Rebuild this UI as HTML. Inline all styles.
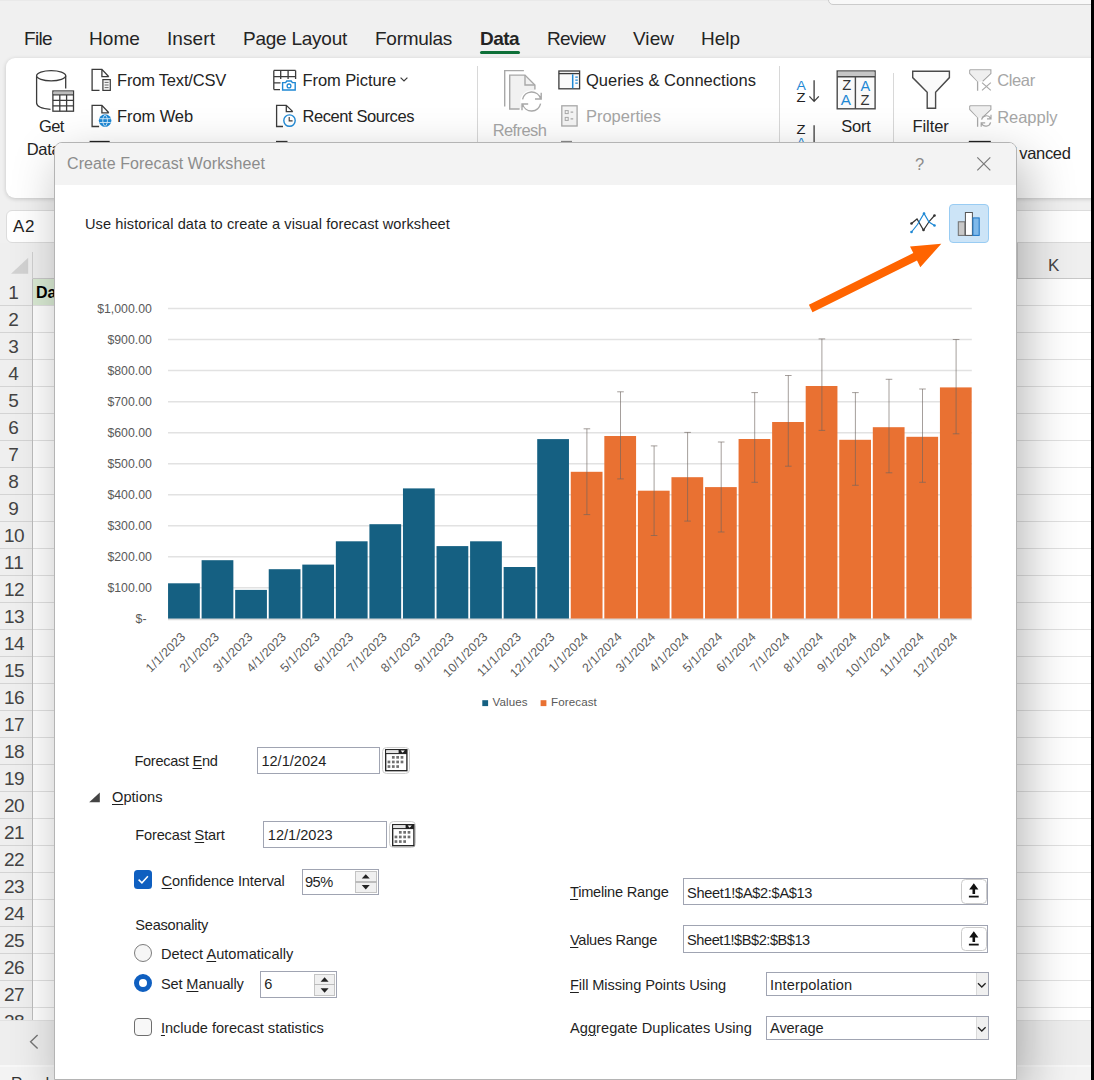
<!DOCTYPE html>
<html><head><meta charset="utf-8"><title>Create Forecast Worksheet</title>
<style>
html,body{margin:0;padding:0}
body{width:1094px;height:1080px;overflow:hidden;position:relative;background:#f0f0f0;font-family:"Liberation Sans",sans-serif}
.b{position:absolute;display:block}
.t{position:absolute;white-space:nowrap}
svg text{font-family:"Liberation Sans",sans-serif}
u{text-decoration-thickness:1px;text-underline-offset:1.5px}
</style></head><body>
<div class="b" style="left:0px;top:0px;width:828px;height:1px;background:#e9e9e9;"></div>
<div class="b" style="left:828px;top:-7px;width:266px;height:9.5px;background:#f8f8f8;border:1.4px solid #cbcbcb;border-radius:5px;"></div>
<div class="t" style="left:24.0px;top:24.5px;font-size:19px;line-height:27px;color:#242424;letter-spacing:-0.653px;">File</div>
<div class="t" style="left:89.0px;top:24.5px;font-size:19px;line-height:27px;color:#242424;letter-spacing:0.080px;">Home</div>
<div class="t" style="left:167.0px;top:24.5px;font-size:19px;line-height:27px;color:#242424;letter-spacing:0.081px;">Insert</div>
<div class="t" style="left:243.0px;top:24.5px;font-size:19px;line-height:27px;color:#242424;letter-spacing:-0.245px;">Page Layout</div>
<div class="t" style="left:375.0px;top:24.5px;font-size:19px;line-height:27px;color:#242424;letter-spacing:-0.272px;">Formulas</div>
<div class="t" style="left:480.0px;top:24.5px;font-size:19px;line-height:27px;color:#242424;font-weight:bold;letter-spacing:-0.545px;">Data</div>
<div class="t" style="left:547.0px;top:24.5px;font-size:19px;line-height:27px;color:#242424;letter-spacing:-0.716px;">Review</div>
<div class="t" style="left:633.0px;top:24.5px;font-size:19px;line-height:27px;color:#242424;letter-spacing:0.040px;">View</div>
<div class="t" style="left:701.0px;top:24.5px;font-size:19px;line-height:27px;color:#242424;letter-spacing:-0.019px;">Help</div>
<div class="b" style="left:479.8px;top:51.2px;width:40.6px;height:3px;background:#0e7038;border-radius:1.5px;"></div>
<div class="b" style="left:6px;top:58px;width:1090px;height:140px;background:#fff;border-radius:9px 0 0 9px;box-shadow:0 1px 4px rgba(0,0,0,.18);"></div>
<div class="b" style="left:6px;top:209.6px;width:1090px;height:33px;background:#fff;border:1px solid #dcdcdc;border-radius:6px;box-sizing:border-box;"></div>
<div class="t" style="left:13.0px;top:214.5px;font-size:17px;line-height:24px;color:#222;letter-spacing:0.603px;">A2</div>
<div class="b" style="left:0;top:243px;width:1091px;height:778px;background:#fff;"></div>
<div class="b" style="left:0px;top:243px;width:1091px;height:35px;background:#efefef;border-bottom:1px solid #c8c8c8;"></div>
<div class="b" style="left:0px;top:278px;width:32px;height:743px;background:#efefef;border-right:1px solid #bdbdbd;"></div>
<svg class="b" style="left:0;top:243px" width="40" height="36"><polygon points="11,30.8 28.2,30.8 28.2,14.8" fill="#d2d2d2"/><line x1="32.5" y1="9" x2="32.5" y2="36" stroke="#d0d0d0"/></svg>
<div class="b" style="left:33px;top:279px;width:30px;height:26px;background:#d9ead3;"></div>
<div class="t" style="left:36.0px;top:281.5px;font-size:16px;line-height:22px;color:#000;font-weight:bold;">Date</div>
<div class="b" style="left:0px;top:305px;width:32px;height:1px;background:#d4d4d4;"></div>
<div class="b" style="left:33px;top:305px;width:1058px;height:1px;background:#e1e1e1;"></div>
<div class="t" style="left:8.2px;top:279.0px;font-size:19px;line-height:27px;color:#444;">1</div>
<div class="b" style="left:0px;top:332px;width:32px;height:1px;background:#d4d4d4;"></div>
<div class="b" style="left:33px;top:332px;width:1058px;height:1px;background:#e1e1e1;"></div>
<div class="t" style="left:8.2px;top:306.0px;font-size:19px;line-height:27px;color:#444;">2</div>
<div class="b" style="left:0px;top:359px;width:32px;height:1px;background:#d4d4d4;"></div>
<div class="b" style="left:33px;top:359px;width:1058px;height:1px;background:#e1e1e1;"></div>
<div class="t" style="left:8.2px;top:333.0px;font-size:19px;line-height:27px;color:#444;">3</div>
<div class="b" style="left:0px;top:386px;width:32px;height:1px;background:#d4d4d4;"></div>
<div class="b" style="left:33px;top:386px;width:1058px;height:1px;background:#e1e1e1;"></div>
<div class="t" style="left:8.2px;top:360.0px;font-size:19px;line-height:27px;color:#444;">4</div>
<div class="b" style="left:0px;top:413px;width:32px;height:1px;background:#d4d4d4;"></div>
<div class="b" style="left:33px;top:413px;width:1058px;height:1px;background:#e1e1e1;"></div>
<div class="t" style="left:8.2px;top:387.0px;font-size:19px;line-height:27px;color:#444;">5</div>
<div class="b" style="left:0px;top:440px;width:32px;height:1px;background:#d4d4d4;"></div>
<div class="b" style="left:33px;top:440px;width:1058px;height:1px;background:#e1e1e1;"></div>
<div class="t" style="left:8.2px;top:414.0px;font-size:19px;line-height:27px;color:#444;">6</div>
<div class="b" style="left:0px;top:467px;width:32px;height:1px;background:#d4d4d4;"></div>
<div class="b" style="left:33px;top:467px;width:1058px;height:1px;background:#e1e1e1;"></div>
<div class="t" style="left:8.2px;top:441.0px;font-size:19px;line-height:27px;color:#444;">7</div>
<div class="b" style="left:0px;top:494px;width:32px;height:1px;background:#d4d4d4;"></div>
<div class="b" style="left:33px;top:494px;width:1058px;height:1px;background:#e1e1e1;"></div>
<div class="t" style="left:8.2px;top:468.0px;font-size:19px;line-height:27px;color:#444;">8</div>
<div class="b" style="left:0px;top:521px;width:32px;height:1px;background:#d4d4d4;"></div>
<div class="b" style="left:33px;top:521px;width:1058px;height:1px;background:#e1e1e1;"></div>
<div class="t" style="left:8.2px;top:495.0px;font-size:19px;line-height:27px;color:#444;">9</div>
<div class="b" style="left:0px;top:548px;width:32px;height:1px;background:#d4d4d4;"></div>
<div class="b" style="left:33px;top:548px;width:1058px;height:1px;background:#e1e1e1;"></div>
<div class="t" style="left:4.0px;top:522.0px;font-size:19px;line-height:27px;color:#444;letter-spacing:-0.566px;">10</div>
<div class="b" style="left:0px;top:575px;width:32px;height:1px;background:#d4d4d4;"></div>
<div class="b" style="left:33px;top:575px;width:1058px;height:1px;background:#e1e1e1;"></div>
<div class="t" style="left:4.0px;top:549.0px;font-size:19px;line-height:27px;color:#444;letter-spacing:0.139px;">11</div>
<div class="b" style="left:0px;top:602px;width:32px;height:1px;background:#d4d4d4;"></div>
<div class="b" style="left:33px;top:602px;width:1058px;height:1px;background:#e1e1e1;"></div>
<div class="t" style="left:4.0px;top:576.0px;font-size:19px;line-height:27px;color:#444;letter-spacing:-0.566px;">12</div>
<div class="b" style="left:0px;top:629px;width:32px;height:1px;background:#d4d4d4;"></div>
<div class="b" style="left:33px;top:629px;width:1058px;height:1px;background:#e1e1e1;"></div>
<div class="t" style="left:4.0px;top:603.0px;font-size:19px;line-height:27px;color:#444;letter-spacing:-0.566px;">13</div>
<div class="b" style="left:0px;top:656px;width:32px;height:1px;background:#d4d4d4;"></div>
<div class="b" style="left:33px;top:656px;width:1058px;height:1px;background:#e1e1e1;"></div>
<div class="t" style="left:4.0px;top:630.0px;font-size:19px;line-height:27px;color:#444;letter-spacing:-0.566px;">14</div>
<div class="b" style="left:0px;top:683px;width:32px;height:1px;background:#d4d4d4;"></div>
<div class="b" style="left:33px;top:683px;width:1058px;height:1px;background:#e1e1e1;"></div>
<div class="t" style="left:4.0px;top:657.0px;font-size:19px;line-height:27px;color:#444;letter-spacing:-0.566px;">15</div>
<div class="b" style="left:0px;top:710px;width:32px;height:1px;background:#d4d4d4;"></div>
<div class="b" style="left:33px;top:710px;width:1058px;height:1px;background:#e1e1e1;"></div>
<div class="t" style="left:4.0px;top:684.0px;font-size:19px;line-height:27px;color:#444;letter-spacing:-0.566px;">16</div>
<div class="b" style="left:0px;top:737px;width:32px;height:1px;background:#d4d4d4;"></div>
<div class="b" style="left:33px;top:737px;width:1058px;height:1px;background:#e1e1e1;"></div>
<div class="t" style="left:4.0px;top:711.0px;font-size:19px;line-height:27px;color:#444;letter-spacing:-0.566px;">17</div>
<div class="b" style="left:0px;top:764px;width:32px;height:1px;background:#d4d4d4;"></div>
<div class="b" style="left:33px;top:764px;width:1058px;height:1px;background:#e1e1e1;"></div>
<div class="t" style="left:4.0px;top:738.0px;font-size:19px;line-height:27px;color:#444;letter-spacing:-0.566px;">18</div>
<div class="b" style="left:0px;top:791px;width:32px;height:1px;background:#d4d4d4;"></div>
<div class="b" style="left:33px;top:791px;width:1058px;height:1px;background:#e1e1e1;"></div>
<div class="t" style="left:4.0px;top:765.0px;font-size:19px;line-height:27px;color:#444;letter-spacing:-0.566px;">19</div>
<div class="b" style="left:0px;top:818px;width:32px;height:1px;background:#d4d4d4;"></div>
<div class="b" style="left:33px;top:818px;width:1058px;height:1px;background:#e1e1e1;"></div>
<div class="t" style="left:4.0px;top:792.0px;font-size:19px;line-height:27px;color:#444;letter-spacing:-0.566px;">20</div>
<div class="b" style="left:0px;top:845px;width:32px;height:1px;background:#d4d4d4;"></div>
<div class="b" style="left:33px;top:845px;width:1058px;height:1px;background:#e1e1e1;"></div>
<div class="t" style="left:4.0px;top:819.0px;font-size:19px;line-height:27px;color:#444;letter-spacing:-0.566px;">21</div>
<div class="b" style="left:0px;top:872px;width:32px;height:1px;background:#d4d4d4;"></div>
<div class="b" style="left:33px;top:872px;width:1058px;height:1px;background:#e1e1e1;"></div>
<div class="t" style="left:4.0px;top:846.0px;font-size:19px;line-height:27px;color:#444;letter-spacing:-0.566px;">22</div>
<div class="b" style="left:0px;top:899px;width:32px;height:1px;background:#d4d4d4;"></div>
<div class="b" style="left:33px;top:899px;width:1058px;height:1px;background:#e1e1e1;"></div>
<div class="t" style="left:4.0px;top:873.0px;font-size:19px;line-height:27px;color:#444;letter-spacing:-0.566px;">23</div>
<div class="b" style="left:0px;top:926px;width:32px;height:1px;background:#d4d4d4;"></div>
<div class="b" style="left:33px;top:926px;width:1058px;height:1px;background:#e1e1e1;"></div>
<div class="t" style="left:4.0px;top:900.0px;font-size:19px;line-height:27px;color:#444;letter-spacing:-0.566px;">24</div>
<div class="b" style="left:0px;top:953px;width:32px;height:1px;background:#d4d4d4;"></div>
<div class="b" style="left:33px;top:953px;width:1058px;height:1px;background:#e1e1e1;"></div>
<div class="t" style="left:4.0px;top:927.0px;font-size:19px;line-height:27px;color:#444;letter-spacing:-0.566px;">25</div>
<div class="b" style="left:0px;top:980px;width:32px;height:1px;background:#d4d4d4;"></div>
<div class="b" style="left:33px;top:980px;width:1058px;height:1px;background:#e1e1e1;"></div>
<div class="t" style="left:4.0px;top:954.0px;font-size:19px;line-height:27px;color:#444;letter-spacing:-0.566px;">26</div>
<div class="b" style="left:0px;top:1007px;width:32px;height:1px;background:#d4d4d4;"></div>
<div class="b" style="left:33px;top:1007px;width:1058px;height:1px;background:#e1e1e1;"></div>
<div class="t" style="left:4.0px;top:981.0px;font-size:19px;line-height:27px;color:#444;letter-spacing:-0.566px;">27</div>
<div class="b" style="left:0px;top:1034px;width:32px;height:1px;background:#d4d4d4;"></div>
<div class="b" style="left:33px;top:1034px;width:1058px;height:1px;background:#e1e1e1;"></div>
<div class="t" style="left:4.0px;top:1008.0px;font-size:19px;line-height:27px;color:#444;letter-spacing:-0.566px;">28</div>
<div class="t" style="left:1048.0px;top:254.3px;font-size:17px;line-height:24px;color:#444;">K</div>
<div class="b" style="left:1017px;top:243px;width:1px;height:35px;background:#d0d0d0;"></div>
<div class="b" style="left:0px;top:1020px;width:1091px;height:45px;background:#eeeeee;border-top:1px solid #e2e2e2;"></div>
<div class="b" style="left:0px;top:1065px;width:1091px;height:15px;background:#f3f3f3;border-top:2px solid #f8f8f8;"></div>
<svg class="b" style="left:26px;top:1032px" width="16" height="20"><polyline points="11.6,3 4.6,9.7 11.6,16.4" fill="none" stroke="#767676" stroke-width="1.4"/></svg>
<div class="t" style="left:11.0px;top:1072.8px;font-size:16px;line-height:22px;color:#333;">Ready</div>
<div class="b" style="left:1091px;top:0px;width:3px;height:1080px;background:#000;"></div>
<svg class="b" style="left:0;top:0" width="1094" height="200" viewBox="0 0 1094 200" fill="none" stroke-linecap="butt">
<path d="M36.6 75.7 V103 C36.6 106.5 42 108.6 50.5 109.3 M65.7 75.7 V88.5" stroke="#3b3b3b" stroke-width="1.3"/>
<ellipse cx="51.15" cy="75.7" rx="14.55" ry="5.1" stroke="#3b3b3b" stroke-width="1.3" fill="#fff"/>
<rect x="52.9" y="91" width="20.6" height="20.2" fill="#fff" stroke="#3b3b3b" stroke-width="1.3"/>
<rect x="53.5" y="91.6" width="19.4" height="2.6" fill="#bdbdbd"/>
<path d="M52.9 94.8 H73.5 M52.9 100.3 H73.5 M52.9 105.8 H73.5 M59.8 94.8 V111.2 M66.6 94.8 V111.2" stroke="#3b3b3b" stroke-width="1.3"/>
<path d="M99.5 90.4 H92.1 V69.3 H101.89999999999999 L108.8 76.7 M101.89999999999999 69.3 V76.7 H108.8" stroke="#3b3b3b" stroke-width="1.3"/>
<rect x="102.9" y="79.6" width="7.4" height="10.8" stroke="#3b3b3b" stroke-width="1.2" fill="#f4f4f4"/>
<path d="M104.6 82.4 H108.6 M104.6 85 H108.6 M104.6 87.6 H108.6" stroke="#6a6a6a" stroke-width="1"/>
<path d="M99.1 126.5 H92.1 V105.4 H101.89999999999999 L108.8 112.80000000000001 M101.89999999999999 105.4 V112.80000000000001 H108.8" stroke="#3b3b3b" stroke-width="1.3"/>
<circle cx="105.1" cy="120.6" r="6.3" fill="#1e88d4"/>
<path d="M99.5 118.7 H110.7 M99.5 122.5 H110.7 M105.1 114.8 C102 117.5 102 123.7 105.1 126.4 C108.2 123.7 108.2 117.5 105.1 114.8 Z" stroke="#d9ecfa" stroke-width="0.9"/>
<path d="M89.6 141.5 H109.7" stroke="#222" stroke-width="1.3"/>
<path d="M276 141.5 H287.5" stroke="#333" stroke-width="1.3"/>
<path d="M561 141.5 H572" stroke="#8a8a8a" stroke-width="1.3"/>
<path d="M968.8 141.5 H990.8" stroke="#222" stroke-width="1.3"/>
<path d="M273.8 70.4 H295.6 M273.8 76.7 H295.6 M273.8 82.9 H280.5 M273.8 89.6 H280 M273.8 70.4 V89.6 M280.7 70.4 V79 M288.1 70.4 V79 M295.6 70.4 V79" stroke="#3b3b3b" stroke-width="1.3"/>
<path d="M282.6 90 V82.6 H285.6 L286.8 81 H291.2 L292.4 82.6 H295.2 V90 Z" stroke="#1e88d4" stroke-width="1.4" fill="#fff"/>
<circle cx="289" cy="85.9" r="1.9" stroke="#1e88d4" stroke-width="1.3"/>
<path d="M283 126.5 H276.6 V105.4 H286.3 L292.8 111.6 M286.3 105.4 V111.6 H292.8" stroke="#3b3b3b" stroke-width="1.3"/>
<circle cx="289.5" cy="120.6" r="5.7" stroke="#1e88d4" stroke-width="1.4" fill="#fff"/>
<path d="M289.2 117 V120.9 H292.6" stroke="#3b3b3b" stroke-width="1.1"/>
<path d="M400.6 77.6 L404 81 L407.4 77.6" stroke="#3b3b3b" stroke-width="1.2"/>
<path d="M477.5 66 V142 M779.5 66 V142 M893.5 73 V142" stroke="#d8d8d8" stroke-width="1"/>
<path d="M504.7 106.6 V70.6 H523.9" stroke="#a8a8a8" stroke-width="1.4"/>
<path d="M519.6 109 H509.7 V75.1 H525 L534.9 85 V89.5" stroke="#a8a8a8" stroke-width="1.4" fill="#f1f1f1"/>
<path d="M525 75.1 V85 H534.9" stroke="#a8a8a8" stroke-width="1.4"/>
<circle cx="531.6" cy="101.5" r="11.2" fill="#fff"/>
<path d="M522.6 99.3 A9.3 9.3 0 0 1 540.6 98.6 M541.2 92.8 V99 H535 M540.6 103.7 A9.3 9.3 0 0 1 522.6 104.4 M522 110.2 V104 H528.2" stroke="#a8a8a8" stroke-width="1.4"/>
<rect x="558.9" y="71" width="20.7" height="17.8" stroke="#3b3b3b" stroke-width="1.3" fill="#fafafa"/>
<path d="M558.9 73.6 H579.6" stroke="#3b3b3b" stroke-width="1.3"/>
<path d="M572.7 74.3 V88.2" stroke="#1e88d4" stroke-width="1.5"/>
<path d="M575.3 77.2 H577.8 M575.3 80.2 H577.8 M575.3 83.2 H577.8" stroke="#1e88d4" stroke-width="1.3"/>
<rect x="561.8" y="105.8" width="15.3" height="20.2" stroke="#a8a8a8" stroke-width="1.3" fill="#f4f4f4"/>
<rect x="565.2" y="110.6" width="3" height="3" stroke="#a8a8a8" stroke-width="1"/><rect x="565.2" y="117.4" width="3" height="3" stroke="#a8a8a8" stroke-width="1"/>
<path d="M570.6 112.1 H573.2 M570.6 118.9 H573.2" stroke="#a8a8a8" stroke-width="1.1"/>
<path d="M814.1 80.3 V101.2 M809.4 96.4 L814.1 101.4 L818.8 96.4" stroke="#3b3b3b" stroke-width="1.3"/>
<path d="M814.1 125.3 V143" stroke="#3b3b3b" stroke-width="1.3"/>
<rect x="837.2" y="71" width="37.9" height="37.8" stroke="#4a4a4a" stroke-width="1.4" fill="#fafafa"/>
<rect x="837.9" y="71.7" width="36.5" height="4.4" fill="#c6c6c6"/>
<path d="M837.2 76.7 H875.1 M855.4 76.7 V108.8" stroke="#4a4a4a" stroke-width="1.4"/>
<path d="M912.7 71.2 H949.4 V77.6 L935.6 92.2 V108.2 H927.2 V92.2 L912.7 77.6 Z" stroke="#4a4a4a" stroke-width="1.4" fill="#fafafa"/>
<path d="M969.8 69.8 H990.8 V73.39999999999999 L982.6 81.3 M977.6 90.8 V81.3 L969.8 73.39999999999999 V69.8" stroke="#a8a8a8" stroke-width="1.3" fill="none"/><path d="M970.4 70.39999999999999 H990.2 V73.2 L981 81.8 H978 L970.4 73.2 Z" fill="#efefef"/>
<path d="M982 82.6 L990.8 90.4 M990.8 82.6 L982 90.4" stroke="#a8a8a8" stroke-width="1.2"/>
<path d="M969.8 105.8 H990.8 V109.39999999999999 L982.6 117.3 M977.6 126.8 V117.3 L969.8 109.39999999999999 V105.8" stroke="#a8a8a8" stroke-width="1.3" fill="none"/><path d="M970.4 106.39999999999999 H990.2 V109.2 L981 117.8 H978 L970.4 109.2 Z" fill="#efefef"/>
<path d="M981.6 119.6 A4.8 4.8 0 0 1 990.6 118.4 M991 114.8 V118.8 H987 M990.6 122.4 A4.8 4.8 0 0 1 981.6 123.4 M981.2 126.8 V122.8 H985.2" stroke="#a8a8a8" stroke-width="1.2"/>
</svg>
<svg class="b" style="left:0;top:0" width="1094" height="143" viewBox="0 0 1094 143">
<text x="796.6" y="89.7" font-size="13.13" fill="#1e88d4" textLength="9.4" lengthAdjust="spacingAndGlyphs">A</text>
<text x="796.6" y="101.7" font-size="12.57" fill="#222" textLength="9.0" lengthAdjust="spacingAndGlyphs">Z</text>
<text x="796.6" y="134.4" font-size="12.71" fill="#222" textLength="9.0" lengthAdjust="spacingAndGlyphs">Z</text>
<text x="796.6" y="146.7" font-size="13.13" fill="#1e88d4" textLength="9.4" lengthAdjust="spacingAndGlyphs">A</text>
<text x="842.2" y="90.2" font-size="13.83" fill="#333" textLength="9.0" lengthAdjust="spacingAndGlyphs">Z</text>
<text x="840.7" y="105.4" font-size="15.08" fill="#1e88d4" textLength="10.2" lengthAdjust="spacingAndGlyphs">A</text>
<text x="860.5" y="91.1" font-size="15.08" fill="#1e88d4" textLength="9.7" lengthAdjust="spacingAndGlyphs">A</text>
<text x="860.5" y="105.4" font-size="15.08" fill="#333" textLength="9.0" lengthAdjust="spacingAndGlyphs">Z</text>
</svg>
<div class="t" style="left:38.9px;top:114.9px;font-size:16.5px;line-height:23px;color:#242424;letter-spacing:-0.531px;">Get</div>
<div class="t" style="left:26.8px;top:137.6px;font-size:16.5px;line-height:23px;color:#242424;letter-spacing:-0.338px;">Data</div>
<div class="t" style="left:117.0px;top:68.9px;font-size:16.5px;line-height:23px;color:#242424;letter-spacing:-0.196px;">From Text/CSV</div>
<div class="t" style="left:117.0px;top:105.0px;font-size:16.5px;line-height:23px;color:#242424;letter-spacing:-0.088px;">From Web</div>
<div class="t" style="left:302.5px;top:68.9px;font-size:16.5px;line-height:23px;color:#242424;letter-spacing:-0.077px;">From Picture</div>
<div class="t" style="left:302.5px;top:105.0px;font-size:16.5px;line-height:23px;color:#242424;letter-spacing:-0.421px;">Recent Sources</div>
<div class="t" style="left:492.7px;top:118.7px;font-size:16.5px;line-height:23px;color:#a6a6a6;letter-spacing:-0.610px;">Refresh</div>
<div class="t" style="left:586.0px;top:68.9px;font-size:16.5px;line-height:23px;color:#242424;letter-spacing:0.016px;">Queries &amp; Connections</div>
<div class="t" style="left:586.0px;top:105.0px;font-size:16.5px;line-height:23px;color:#a6a6a6;letter-spacing:-0.020px;">Properties</div>
<div class="t" style="left:841.2px;top:115.3px;font-size:16.5px;line-height:23px;color:#242424;letter-spacing:-0.215px;">Sort</div>
<div class="t" style="left:912.6px;top:115.3px;font-size:16.5px;line-height:23px;color:#242424;letter-spacing:-0.111px;">Filter</div>
<div class="t" style="left:997.2px;top:69.3px;font-size:16.5px;line-height:23px;color:#a6a6a6;letter-spacing:-0.365px;">Clear</div>
<div class="t" style="left:997.2px;top:105.5px;font-size:16.5px;line-height:23px;color:#a6a6a6;letter-spacing:-0.033px;">Reapply</div>
<div class="t" style="left:997.0px;top:141.9px;font-size:16.5px;line-height:23px;color:#242424;">A<span style="letter-spacing:2px">d</span><span style="letter-spacing:-0.3px">vanced</span></div>
<div class="b" style="left:53.9px;top:141.8px;width:963.6px;height:938.2px;background:#fff;border:1px solid #b4b4b4;border-radius:8px 8px 0 0;box-shadow:8px 18px 50px 0 rgba(0,0,0,.29);box-sizing:border-box;overflow:hidden"><div class="b" style="left:0;top:0;width:964px;height:41.8px;background:#f3f3f3"></div></div>
<div class="t" style="left:67.0px;top:152.8px;font-size:16px;line-height:22px;color:#8c8c8c;letter-spacing:0.107px;">Create Forecast Worksheet</div>
<div class="t" style="left:915.0px;top:152.5px;font-size:16.5px;line-height:23px;color:#8c8c8c;">?</div>
<svg class="b" style="left:975px;top:155px" width="18" height="18"><path d="M2.3 2.3 L15.3 15.3 M15.3 2.3 L2.3 15.3" stroke="#7a7a7a" stroke-width="1.2" fill="none"/></svg>
<div class="t" style="left:85.0px;top:214.2px;font-size:14.6px;line-height:20px;color:#1f1f1f;letter-spacing:0.069px;">Use historical data to create a visual forecast worksheet</div>
<div class="b" style="left:948.5px;top:203.5px;width:40.5px;height:39px;background:#cce4f7;border:1px solid #99ccf3;border-radius:4px;box-sizing:border-box"></div>
<svg class="b" style="left:0;top:0" width="1094" height="1080" viewBox="0 0 1094 1080" fill="none">
<rect x="958.3" y="221.8" width="6.6" height="13.6" fill="#c8c8c8" stroke="#6e6e6e" stroke-width="1"/>
<rect x="965.4" y="212.5" width="7" height="22.9" fill="#fff" stroke="#555" stroke-width="1"/>
<rect x="972.9" y="217.9" width="6.3" height="17.5" fill="#7fb9ea" stroke="#1b74c4" stroke-width="1"/>
<path d="M911.5 223.5 L917 219 L923.5 230 L929.5 221 L934.5 215.5" stroke="#333" stroke-width="1.2"/>
<path d="M911.5 232 L917.5 224.5 L924 213.5 L929 222 L934.5 225.5" stroke="#1e88d4" stroke-width="1.2"/>
<circle cx="911.5" cy="223.5" r="1.3" fill="#333"/>
<circle cx="923.5" cy="230" r="1.3" fill="#333"/>
<circle cx="934.5" cy="215.5" r="1.3" fill="#333"/>
<circle cx="911.5" cy="232" r="1.3" fill="#1e88d4"/>
<circle cx="924" cy="213.5" r="1.3" fill="#1e88d4"/>
<circle cx="934.5" cy="225.5" r="1.3" fill="#1e88d4"/>
<line x1="168.0" y1="618.8" x2="971.8" y2="618.8" stroke="#e2e2e2" stroke-width="1.5"/>
<line x1="168.0" y1="587.8" x2="971.8" y2="587.8" stroke="#e2e2e2" stroke-width="1.5"/>
<line x1="168.0" y1="556.8" x2="971.8" y2="556.8" stroke="#e2e2e2" stroke-width="1.5"/>
<line x1="168.0" y1="525.7" x2="971.8" y2="525.7" stroke="#e2e2e2" stroke-width="1.5"/>
<line x1="168.0" y1="494.7" x2="971.8" y2="494.7" stroke="#e2e2e2" stroke-width="1.5"/>
<line x1="168.0" y1="463.7" x2="971.8" y2="463.7" stroke="#e2e2e2" stroke-width="1.5"/>
<line x1="168.0" y1="432.7" x2="971.8" y2="432.7" stroke="#e2e2e2" stroke-width="1.5"/>
<line x1="168.0" y1="401.7" x2="971.8" y2="401.7" stroke="#e2e2e2" stroke-width="1.5"/>
<line x1="168.0" y1="370.6" x2="971.8" y2="370.6" stroke="#e2e2e2" stroke-width="1.5"/>
<line x1="168.0" y1="339.6" x2="971.8" y2="339.6" stroke="#e2e2e2" stroke-width="1.5"/>
<line x1="168.0" y1="308.6" x2="971.8" y2="308.6" stroke="#e2e2e2" stroke-width="1.5"/>
<rect x="168.05" y="583.3" width="31.75" height="35.4" fill="#156082"/>
<rect x="201.61" y="560.2" width="31.75" height="58.5" fill="#156082"/>
<rect x="235.17" y="589.9" width="31.75" height="28.8" fill="#156082"/>
<rect x="268.73" y="569.2" width="31.75" height="49.5" fill="#156082"/>
<rect x="302.29" y="564.6" width="31.75" height="54.1" fill="#156082"/>
<rect x="335.85" y="541.3" width="31.75" height="77.4" fill="#156082"/>
<rect x="369.41" y="524.2" width="31.75" height="94.5" fill="#156082"/>
<rect x="402.97" y="488.4" width="31.75" height="130.3" fill="#156082"/>
<rect x="436.53" y="546.1" width="31.75" height="72.6" fill="#156082"/>
<rect x="470.09" y="541.3" width="31.75" height="77.4" fill="#156082"/>
<rect x="503.65" y="567.0" width="31.75" height="51.7" fill="#156082"/>
<rect x="537.21" y="439.1" width="31.75" height="179.6" fill="#156082"/>
<rect x="570.77" y="471.8" width="31.75" height="146.9" fill="#e97132"/>
<rect x="604.33" y="436.0" width="31.75" height="182.7" fill="#e97132"/>
<rect x="637.89" y="490.7" width="31.75" height="128.0" fill="#e97132"/>
<rect x="671.45" y="477.2" width="31.75" height="141.5" fill="#e97132"/>
<rect x="705.01" y="487.1" width="31.75" height="131.6" fill="#e97132"/>
<rect x="738.57" y="439.0" width="31.75" height="179.7" fill="#e97132"/>
<rect x="772.13" y="422.0" width="31.75" height="196.7" fill="#e97132"/>
<rect x="805.69" y="386.0" width="31.75" height="232.7" fill="#e97132"/>
<rect x="839.25" y="439.8" width="31.75" height="178.9" fill="#e97132"/>
<rect x="872.81" y="427.2" width="31.75" height="191.5" fill="#e97132"/>
<rect x="906.37" y="436.8" width="31.75" height="181.9" fill="#e97132"/>
<rect x="939.93" y="387.4" width="31.75" height="231.3" fill="#e97132"/>
<line x1="168.0" y1="619.5" x2="971.8" y2="619.5" stroke="#dcdcdc" stroke-width="1.5"/>
<path d="M586.9 428.8 V514.6 M583.6 428.8 H590.2 M583.6 514.6 H590.2" stroke="rgba(110,100,95,.62)" stroke-width="1"/>
<path d="M620.5 391.8 V478.9 M617.2 391.8 H623.8 M617.2 478.9 H623.8" stroke="rgba(110,100,95,.62)" stroke-width="1"/>
<path d="M654.1 445.9 V535.5 M650.8 445.9 H657.4 M650.8 535.5 H657.4" stroke="rgba(110,100,95,.62)" stroke-width="1"/>
<path d="M687.6 432.4 V521.1 M684.3 432.4 H690.9 M684.3 521.1 H690.9" stroke="rgba(110,100,95,.62)" stroke-width="1"/>
<path d="M721.2 442.0 V532.0 M717.9 442.0 H724.5 M717.9 532.0 H724.5" stroke="rgba(110,100,95,.62)" stroke-width="1"/>
<path d="M754.7 392.6 V482.3 M751.4 392.6 H758.0 M751.4 482.3 H758.0" stroke="rgba(110,100,95,.62)" stroke-width="1"/>
<path d="M788.3 375.5 V466.2 M785.0 375.5 H791.6 M785.0 466.2 H791.6" stroke="rgba(110,100,95,.62)" stroke-width="1"/>
<path d="M821.9 338.9 V430.4 M818.6 338.9 H825.2 M818.6 430.4 H825.2" stroke="rgba(110,100,95,.62)" stroke-width="1"/>
<path d="M855.4 392.6 V485.3 M852.1 392.6 H858.7 M852.1 485.3 H858.7" stroke="rgba(110,100,95,.62)" stroke-width="1"/>
<path d="M889.0 379.3 V472.8 M885.7 379.3 H892.3 M885.7 472.8 H892.3" stroke="rgba(110,100,95,.62)" stroke-width="1"/>
<path d="M922.5 389.0 V482.3 M919.2 389.0 H925.8 M919.2 482.3 H925.8" stroke="rgba(110,100,95,.62)" stroke-width="1"/>
<path d="M956.1 339.5 V433.8 M952.8 339.5 H959.4 M952.8 433.8 H959.4" stroke="rgba(110,100,95,.62)" stroke-width="1"/>
<polygon points="812.5,312.2 917.0,260.4 920.3,267.2 941.3,243.8 910.0,246.4 913.3,253.1 808.9,304.8" fill="#ff6400"/>
<text x="146.5" y="623.1" text-anchor="end" font-size="12.3" fill="#595959">$-</text>
<text x="151.9" y="592.1" text-anchor="end" font-size="12.3" fill="#595959">$100.00</text>
<text x="151.9" y="561.1" text-anchor="end" font-size="12.3" fill="#595959">$200.00</text>
<text x="151.9" y="530.0" text-anchor="end" font-size="12.3" fill="#595959">$300.00</text>
<text x="151.9" y="499.0" text-anchor="end" font-size="12.3" fill="#595959">$400.00</text>
<text x="151.9" y="468.0" text-anchor="end" font-size="12.3" fill="#595959">$500.00</text>
<text x="151.9" y="437.0" text-anchor="end" font-size="12.3" fill="#595959">$600.00</text>
<text x="151.9" y="406.0" text-anchor="end" font-size="12.3" fill="#595959">$700.00</text>
<text x="151.9" y="374.9" text-anchor="end" font-size="12.3" fill="#595959">$800.00</text>
<text x="151.9" y="343.9" text-anchor="end" font-size="12.3" fill="#595959">$900.00</text>
<text x="151.9" y="312.9" text-anchor="end" font-size="12.3" fill="#595959">$1,000.00</text>
<text x="186.4" y="637.4" text-anchor="end" font-size="12.3" letter-spacing="0.3" fill="#595959" transform="rotate(-45 186.4 637.4)">1/1/2023</text>
<text x="220.0" y="637.4" text-anchor="end" font-size="12.3" letter-spacing="0.3" fill="#595959" transform="rotate(-45 220.0 637.4)">2/1/2023</text>
<text x="253.5" y="637.4" text-anchor="end" font-size="12.3" letter-spacing="0.3" fill="#595959" transform="rotate(-45 253.5 637.4)">3/1/2023</text>
<text x="287.1" y="637.4" text-anchor="end" font-size="12.3" letter-spacing="0.3" fill="#595959" transform="rotate(-45 287.1 637.4)">4/1/2023</text>
<text x="320.7" y="637.4" text-anchor="end" font-size="12.3" letter-spacing="0.3" fill="#595959" transform="rotate(-45 320.7 637.4)">5/1/2023</text>
<text x="354.2" y="637.4" text-anchor="end" font-size="12.3" letter-spacing="0.3" fill="#595959" transform="rotate(-45 354.2 637.4)">6/1/2023</text>
<text x="387.8" y="637.4" text-anchor="end" font-size="12.3" letter-spacing="0.3" fill="#595959" transform="rotate(-45 387.8 637.4)">7/1/2023</text>
<text x="421.3" y="637.4" text-anchor="end" font-size="12.3" letter-spacing="0.3" fill="#595959" transform="rotate(-45 421.3 637.4)">8/1/2023</text>
<text x="454.9" y="637.4" text-anchor="end" font-size="12.3" letter-spacing="0.3" fill="#595959" transform="rotate(-45 454.9 637.4)">9/1/2023</text>
<text x="488.5" y="637.4" text-anchor="end" font-size="12.3" letter-spacing="0.3" fill="#595959" transform="rotate(-45 488.5 637.4)">10/1/2023</text>
<text x="522.0" y="637.4" text-anchor="end" font-size="12.3" letter-spacing="0.3" fill="#595959" transform="rotate(-45 522.0 637.4)">11/1/2023</text>
<text x="555.6" y="637.4" text-anchor="end" font-size="12.3" letter-spacing="0.3" fill="#595959" transform="rotate(-45 555.6 637.4)">12/1/2023</text>
<text x="589.1" y="637.4" text-anchor="end" font-size="12.3" letter-spacing="0.3" fill="#595959" transform="rotate(-45 589.1 637.4)">1/1/2024</text>
<text x="622.7" y="637.4" text-anchor="end" font-size="12.3" letter-spacing="0.3" fill="#595959" transform="rotate(-45 622.7 637.4)">2/1/2024</text>
<text x="656.3" y="637.4" text-anchor="end" font-size="12.3" letter-spacing="0.3" fill="#595959" transform="rotate(-45 656.3 637.4)">3/1/2024</text>
<text x="689.8" y="637.4" text-anchor="end" font-size="12.3" letter-spacing="0.3" fill="#595959" transform="rotate(-45 689.8 637.4)">4/1/2024</text>
<text x="723.4" y="637.4" text-anchor="end" font-size="12.3" letter-spacing="0.3" fill="#595959" transform="rotate(-45 723.4 637.4)">5/1/2024</text>
<text x="756.9" y="637.4" text-anchor="end" font-size="12.3" letter-spacing="0.3" fill="#595959" transform="rotate(-45 756.9 637.4)">6/1/2024</text>
<text x="790.5" y="637.4" text-anchor="end" font-size="12.3" letter-spacing="0.3" fill="#595959" transform="rotate(-45 790.5 637.4)">7/1/2024</text>
<text x="824.1" y="637.4" text-anchor="end" font-size="12.3" letter-spacing="0.3" fill="#595959" transform="rotate(-45 824.1 637.4)">8/1/2024</text>
<text x="857.6" y="637.4" text-anchor="end" font-size="12.3" letter-spacing="0.3" fill="#595959" transform="rotate(-45 857.6 637.4)">9/1/2024</text>
<text x="891.2" y="637.4" text-anchor="end" font-size="12.3" letter-spacing="0.3" fill="#595959" transform="rotate(-45 891.2 637.4)">10/1/2024</text>
<text x="924.7" y="637.4" text-anchor="end" font-size="12.3" letter-spacing="0.3" fill="#595959" transform="rotate(-45 924.7 637.4)">11/1/2024</text>
<text x="958.3" y="637.4" text-anchor="end" font-size="12.3" letter-spacing="0.3" fill="#595959" transform="rotate(-45 958.3 637.4)">12/1/2024</text>
<rect x="482.3" y="700.2" width="5.8" height="5.9" fill="#156082"/><rect x="540.6" y="700.2" width="5.8" height="5.9" fill="#e97132"/>
<text x="492.4" y="706.1" font-size="11.6" fill="#595959" textLength="35.2" lengthAdjust="spacing">Values</text>
<text x="551" y="706.1" font-size="11.6" fill="#595959" textLength="45.8" lengthAdjust="spacing">Forecast</text>
</svg>
<div class="t" style="left:134.4px;top:751.0px;font-size:14.6px;line-height:20px;color:#1f1f1f;letter-spacing:-0.302px;">Forecast <u>E</u>nd</div>
<div class="b" style="left:257px;top:747px;width:123.2px;height:27px;background:#fff;border:1px solid #a0a4b2;box-sizing:border-box;"></div>
<div class="t" style="left:261.4px;top:751.0px;font-size:14.6px;line-height:20px;color:#1f1f1f;letter-spacing:-0.005px;">12/1/2024</div>
<div class="b" style="left:382.2px;top:746.7px;width:28.1px;height:27.6px;background:#fdfdfd;border:1px solid #cecece;border-radius:4.5px;box-sizing:border-box;"></div>
<svg class="b" style="left:384.8px;top:749.2px" width="23" height="23" viewBox="0 0 23 23" fill="none"><rect x="0.7" y="0.7" width="21.2" height="21" fill="#fff" stroke="#1e1e1e" stroke-width="1.3"/><rect x="1.2" y="1.2" width="12.6" height="3.2" fill="#e4e4e4"/><rect x="13.6" y="0.7" width="8.3" height="4" fill="#1e1e1e"/><path d="M0.7 4.6 H21.9" stroke="#1e1e1e" stroke-width="1"/><path d="M15.6 1.5 L17.7 3.7 L19.8 1.5 Z" fill="#fff"/><rect x="6.95" y="7.00" width="2.7" height="2.7" fill="#707070"/><rect x="11.30" y="7.00" width="2.7" height="2.7" fill="#707070"/><rect x="15.65" y="7.00" width="2.7" height="2.7" fill="#707070"/><rect x="2.60" y="11.60" width="2.7" height="2.7" fill="#707070"/><rect x="6.95" y="11.60" width="2.7" height="2.7" fill="#707070"/><rect x="11.30" y="11.60" width="2.7" height="2.7" fill="#707070"/><rect x="15.65" y="11.60" width="2.7" height="2.7" fill="#707070"/><rect x="2.60" y="16.20" width="2.7" height="2.7" fill="#707070"/><rect x="6.95" y="16.20" width="2.7" height="2.7" fill="#707070"/><rect x="11.30" y="16.20" width="2.7" height="2.7" fill="#707070"/></svg>
<svg class="b" style="left:88px;top:791px" width="14" height="13"><path d="M11.8 1.6 V11.2 H1.2 Z" fill="#444"/></svg>
<div class="t" style="left:112.0px;top:787.0px;font-size:14.6px;line-height:20px;color:#1f1f1f;letter-spacing:0.027px;"><u>O</u>ptions</div>
<div class="t" style="left:135.3px;top:825.0px;font-size:14.6px;line-height:20px;color:#1f1f1f;letter-spacing:-0.170px;">Forecast <u>S</u>tart</div>
<div class="b" style="left:263.3px;top:821.2px;width:124.2px;height:26.6px;background:#fff;border:1px solid #a0a4b2;box-sizing:border-box;"></div>
<div class="t" style="left:267.8px;top:825.0px;font-size:14.6px;line-height:20px;color:#1f1f1f;letter-spacing:-0.005px;">12/1/2023</div>
<div class="b" style="left:388.5px;top:820.9px;width:27.8px;height:27.6px;background:#fdfdfd;border:1px solid #cecece;border-radius:4.5px;box-sizing:border-box;"></div>
<svg class="b" style="left:391.9px;top:823.6999999999999px" width="23" height="23" viewBox="0 0 23 23" fill="none"><rect x="0.7" y="0.7" width="21.2" height="21" fill="#fff" stroke="#1e1e1e" stroke-width="1.3"/><rect x="1.2" y="1.2" width="12.6" height="3.2" fill="#e4e4e4"/><rect x="13.6" y="0.7" width="8.3" height="4" fill="#1e1e1e"/><path d="M0.7 4.6 H21.9" stroke="#1e1e1e" stroke-width="1"/><path d="M15.6 1.5 L17.7 3.7 L19.8 1.5 Z" fill="#fff"/><rect x="6.95" y="7.00" width="2.7" height="2.7" fill="#707070"/><rect x="11.30" y="7.00" width="2.7" height="2.7" fill="#707070"/><rect x="15.65" y="7.00" width="2.7" height="2.7" fill="#707070"/><rect x="2.60" y="11.60" width="2.7" height="2.7" fill="#707070"/><rect x="6.95" y="11.60" width="2.7" height="2.7" fill="#707070"/><rect x="11.30" y="11.60" width="2.7" height="2.7" fill="#707070"/><rect x="15.65" y="11.60" width="2.7" height="2.7" fill="#707070"/><rect x="2.60" y="16.20" width="2.7" height="2.7" fill="#707070"/><rect x="6.95" y="16.20" width="2.7" height="2.7" fill="#707070"/><rect x="11.30" y="16.20" width="2.7" height="2.7" fill="#707070"/></svg>
<div class="b" style="left:133.7px;top:870.2px;width:18.4px;height:18.4px;background:#0f5fc0;border-radius:3.5px;"></div>
<svg class="b" style="left:133.7px;top:870.2px" width="19" height="19"><path d="M4.6 9.6 L7.9 12.8 L13.9 6.2" stroke="#fff" stroke-width="1.5" fill="none"/></svg>
<div class="t" style="left:161.6px;top:871.0px;font-size:14.6px;line-height:20px;color:#1f1f1f;letter-spacing:-0.141px;"><u>C</u>onfidence Interval</div>
<div class="b" style="left:301.7px;top:868.7px;width:77.4px;height:26.6px;background:#fff;border:1px solid #a0a4b2;box-sizing:border-box;"></div>
<div class="t" style="left:304.9px;top:872.0px;font-size:14.6px;line-height:20px;color:#1f1f1f;letter-spacing:-0.474px;">95%</div>
<div class="b" style="left:355.4px;top:871px;width:21.5px;height:21.6px;background:#f0f0f0;border:1px solid #c4c4c4;box-sizing:border-box;"></div>
<div class="b" style="left:355.4px;top:881.0px;width:21.5px;height:1.6px;background:#bcbcbc;"></div>
<svg class="b" style="left:355.4px;top:871px" width="21.5" height="21.6"><path d="M6.75 7.6000000000000005 L10.75 3.2 L14.75 7.6000000000000005 Z M6.75 14.000000000000004 L10.75 18.400000000000002 L14.75 14.000000000000004 Z" fill="#222"/></svg>
<div class="t" style="left:135.3px;top:915.0px;font-size:14.6px;line-height:20px;color:#1f1f1f;letter-spacing:-0.252px;">Seasonality</div>
<div class="b" style="left:133.7px;top:944px;width:18px;height:18px;background:#f6f6f6;border:1px solid #7c7c7c;border-radius:50%;box-sizing:border-box;"></div>
<div class="t" style="left:160.9px;top:944.0px;font-size:14.6px;line-height:20px;color:#1f1f1f;letter-spacing:0.012px;">Detect <u>A</u>utomatically</div>
<div class="b" style="left:133.7px;top:974.4px;width:18px;height:18px;background:#fff;border:5.2px solid #0f5fc0;border-radius:50%;box-sizing:border-box;"></div>
<div class="t" style="left:160.9px;top:974.0px;font-size:14.6px;line-height:20px;color:#1f1f1f;letter-spacing:-0.125px;">Set <u>M</u>anually</div>
<div class="b" style="left:260.1px;top:971.4px;width:77.4px;height:26.6px;background:#fff;border:1px solid #a0a4b2;box-sizing:border-box;"></div>
<div class="t" style="left:264.2px;top:974.0px;font-size:14.6px;line-height:20px;color:#1f1f1f;">6</div>
<div class="b" style="left:314.2px;top:973.6px;width:21.2px;height:22px;background:#f0f0f0;border:1px solid #c4c4c4;box-sizing:border-box;"></div>
<div class="b" style="left:314.2px;top:983.8000000000001px;width:21.2px;height:1.6px;background:#bcbcbc;"></div>
<svg class="b" style="left:314.2px;top:973.6px" width="21.2" height="22"><path d="M6.6 7.7 L10.6 3.3 L14.6 7.7 Z M6.6 14.3 L10.6 18.7 L14.6 14.3 Z" fill="#222"/></svg>
<div class="b" style="left:133.7px;top:1017.9px;width:18.4px;height:18.4px;background:#f8f8f8;border:1px solid #6e6e6e;border-radius:4px;box-sizing:border-box;"></div>
<div class="t" style="left:160.9px;top:1018.0px;font-size:14.6px;line-height:20px;color:#1f1f1f;letter-spacing:-0.007px;"><u>I</u>nclude forecast statistics</div>
<div class="t" style="left:570.0px;top:882.0px;font-size:14.6px;line-height:20px;color:#1f1f1f;letter-spacing:-0.222px;"><u>T</u>imeline Range</div>
<div class="b" style="left:683.1px;top:877.7px;width:305.4px;height:27.8px;background:#fff;border:1px solid #a0a4b2;box-sizing:border-box;"></div>
<div class="t" style="left:687.1px;top:883.0px;font-size:14.6px;line-height:20px;color:#1f1f1f;letter-spacing:-0.329px;">Sheet1!$A$2:$A$13</div>
<div class="b" style="left:961.1px;top:879.1px;width:26.4px;height:24.6px;background:#fff;border:1px solid #cbcbcb;border-radius:4.5px;box-sizing:border-box;"></div>
<svg class="b" style="left:961.1px;top:879.1px" width="27" height="25"><path d="M12.8 4.2 L8.2 10.4 H11.5 V14.9 H14.1 V10.4 H17.4 Z" fill="#111"/><rect x="7.9" y="16.7" width="9.8" height="1.8" fill="#111"/></svg>
<div class="t" style="left:570.0px;top:930.0px;font-size:14.6px;line-height:20px;color:#1f1f1f;letter-spacing:-0.303px;"><u>V</u>alues Range</div>
<div class="b" style="left:683.1px;top:925.3px;width:305.4px;height:27.3px;background:#fff;border:1px solid #a0a4b2;box-sizing:border-box;"></div>
<div class="t" style="left:687.1px;top:930.0px;font-size:14.6px;line-height:20px;color:#1f1f1f;letter-spacing:-0.470px;">Sheet1!$B$2:$B$13</div>
<div class="b" style="left:961.1px;top:926.7px;width:26.4px;height:24.6px;background:#fff;border:1px solid #cbcbcb;border-radius:4.5px;box-sizing:border-box;"></div>
<svg class="b" style="left:961.1px;top:926.7px" width="27" height="25"><path d="M12.8 4.2 L8.2 10.4 H11.5 V14.9 H14.1 V10.4 H17.4 Z" fill="#111"/><rect x="7.9" y="16.7" width="9.8" height="1.8" fill="#111"/></svg>
<div class="t" style="left:570.0px;top:975.0px;font-size:14.6px;line-height:20px;color:#1f1f1f;letter-spacing:-0.084px;"><u>F</u>ill Missing Points Using</div>
<div class="b" style="left:766px;top:972px;width:222.5px;height:24.2px;background:#fff;border:1px solid #a0a4b2;box-sizing:border-box;"></div>
<div class="b" style="left:975.5px;top:973px;width:12px;height:22.2px;background:#f0f0f0;border-left:1px solid #dadada;box-sizing:border-box;"></div>
<div class="t" style="left:770.0px;top:975.0px;font-size:14.6px;line-height:20px;color:#1f1f1f;letter-spacing:0.158px;">Interpolation</div>
<svg class="b" style="left:975.7px;top:980.5px" width="12" height="9"><path d="M2 2.2 L5.8 6 L9.6 2.2" stroke="#222" stroke-width="1.3" fill="none"/></svg>
<div class="t" style="left:570.0px;top:1018.0px;font-size:14.6px;line-height:20px;color:#1f1f1f;letter-spacing:0.036px;">Ag<u>g</u>regate Duplicates Using</div>
<div class="b" style="left:766px;top:1016.3px;width:222.5px;height:24.2px;background:#fff;border:1px solid #a0a4b2;box-sizing:border-box;"></div>
<div class="b" style="left:975.5px;top:1017.3px;width:12px;height:22.2px;background:#f0f0f0;border-left:1px solid #dadada;box-sizing:border-box;"></div>
<div class="t" style="left:770.0px;top:1018.0px;font-size:14.6px;line-height:20px;color:#1f1f1f;letter-spacing:-0.087px;">Average</div>
<svg class="b" style="left:975.7px;top:1024.8px" width="12" height="9"><path d="M2 2.2 L5.8 6 L9.6 2.2" stroke="#222" stroke-width="1.3" fill="none"/></svg>
</body></html>
